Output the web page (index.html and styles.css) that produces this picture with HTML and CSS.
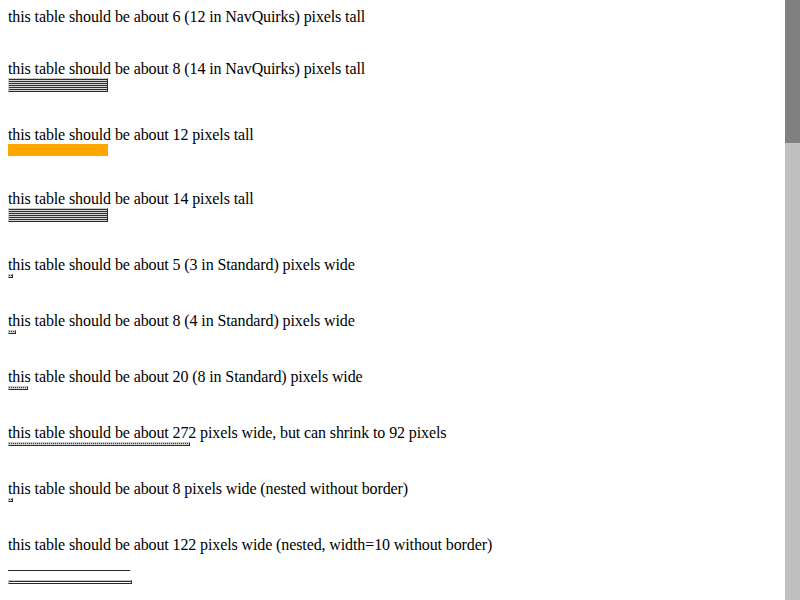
FILE: index.html
```html
<!DOCTYPE html>
<html>
<head>
<meta charset="utf-8">
<title>table sizes</title>
<link rel="stylesheet" href="styles.css">
</head>
<body>
<div class="block">
  <div class="caption">this table should be about 6 (12 in NavQuirks) pixels tall</div>
  <div class="tbl empty"></div>
</div>
<div class="block">
  <div class="caption">this table should be about 8 (14 in NavQuirks) pixels tall</div>
  <div class="tbl striped"><div class="cells rows"></div></div>
</div>
<div class="block">
  <div class="caption">this table should be about 12 pixels tall</div>
  <div class="tbl orange"></div>
</div>
<div class="block">
  <div class="caption">this table should be about 14 pixels tall</div>
  <div class="tbl striped"><div class="cells rows"></div></div>
</div>
<div class="block">
  <div class="caption">this table should be about 5 (3 in Standard) pixels wide</div>
  <div class="tbl tiny w5"><div class="cells dots"></div></div>
</div>
<div class="block">
  <div class="caption">this table should be about 8 (4 in Standard) pixels wide</div>
  <div class="tbl tiny w8"><div class="cells dots"></div></div>
</div>
<div class="block">
  <div class="caption">this table should be about 20 (8 in Standard) pixels wide</div>
  <div class="tbl tiny w20"><div class="cells dots"></div></div>
</div>
<div class="block">
  <div class="caption">this table should be about 272 pixels wide, but can shrink to 92 pixels</div>
  <div class="tbl tiny w182"><div class="cells dots"></div></div>
</div>
<div class="block">
  <div class="caption">this table should be about 8 pixels wide (nested without border)</div>
  <div class="tbl tiny w5"><div class="cells dots"></div></div>
</div>
<div class="block last">
  <div class="caption">this table should be about 122 pixels wide (nested, width=10 without border)</div>
  <div class="nested">
    <div class="rule"></div>
    <div class="tbl tiny w124"><div class="cells bar"></div></div>
  </div>
</div>
<div class="scrollbar"><div class="thumb"></div></div>
</body>
</html>
```

FILE: styles.css
```css
html, body {
  background: #ffffff;
}
body {
  margin: 8px;
  font-family: "Liberation Serif", "Times New Roman", serif;
  font-size: 16px;
  letter-spacing: -0.11px;
  color: #000000;
}
.block {
  margin-bottom: 34px;
}
.caption {
  height: 18px;
  line-height: 18px;
  white-space: nowrap;
}
.tbl {
  box-sizing: border-box;
  border-top: 1px solid #c8c8c8;
  border-left: 1px solid #c8c8c8;
  border-right: 1px solid #2a2a2a;
  border-bottom: 1px solid #2a2a2a;
}
.tbl.empty {
  border: 0;
  height: 0;
}
.striped {
  width: 100px;
  height: 14px;
}
.cells {
  height: 100%;
}
.rows {
  background: repeating-linear-gradient(to bottom, #2e2e2e 0, #2e2e2e 1px, #d6d6d6 1px, #d6d6d6 2px);
}
.orange {
  width: 100px;
  height: 12px;
  border: 0;
  background: #ffa500;
}
.tiny {
  height: 4px;
}
.w5 { width: 5px; }
.w8 { width: 8px; }
.w20 { width: 20px; }
.w182 { width: 182px; }
.w124 { width: 124px; }
.dots {
  background:
    linear-gradient(to bottom, transparent 0, transparent 1px, #d6d6d6 1px, #d6d6d6 2px),
    repeating-linear-gradient(to right, #2e2e2e 0, #2e2e2e 1px, #d6d6d6 1px, #d6d6d6 2px);
}
.bar {
  background: linear-gradient(to bottom, #2e2e2e 0, #2e2e2e 1px, #ffffff 1px, #ffffff 2px);
}
.nested {
  padding-top: 16px;
}
.rule {
  width: 123px;
  height: 1px;
  background: linear-gradient(to right, #2a2a2a 0, #2a2a2a 122px, #c8c8c8 122px);
  margin-bottom: 9px;
}
.scrollbar {
  position: fixed;
  top: 0;
  right: 0;
  width: 15px;
  height: 100%;
  background: #c0c0c0;
}
.thumb {
  height: 143px;
  background: #808080;
}
```
